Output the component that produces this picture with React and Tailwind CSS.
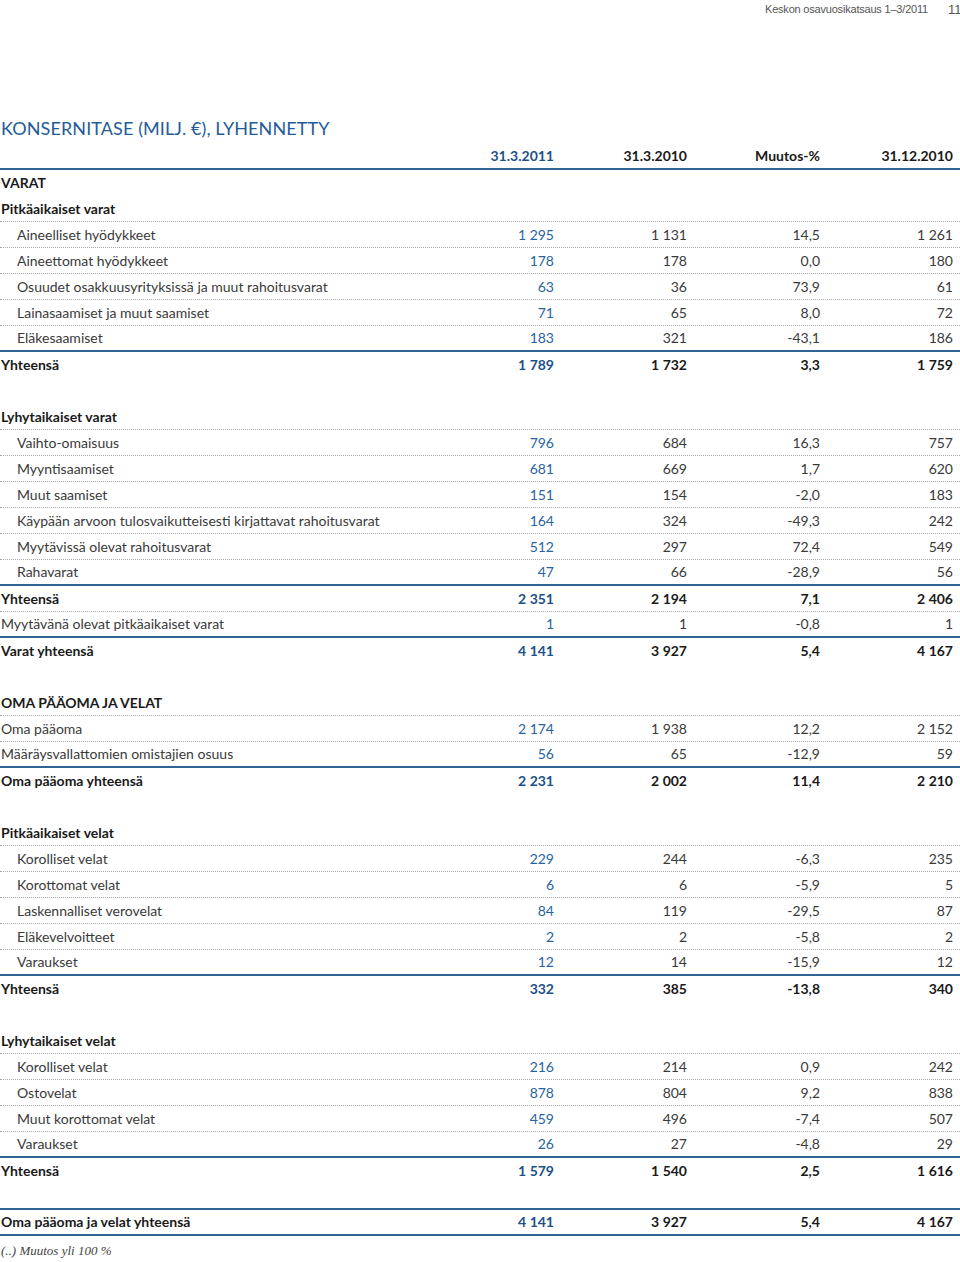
import React from "react";

const D = "dotted";
const S = "solid";

// type: h (section heading bold), r (regular indented), f (regular flush), t (total bold), b (blank)
const rows = [
  { type: "h", label: "VARAT" },
  { type: "h", label: "Pitkäaikaiset varat", line: D },
  { type: "r", label: "Aineelliset hyödykkeet", v: ["1 295", "1 131", "14,5", "1 261"], line: D },
  { type: "r", label: "Aineettomat hyödykkeet", v: ["178", "178", "0,0", "180"], line: D },
  { type: "r", label: "Osuudet osakkuusyrityksissä ja muut rahoitusvarat", v: ["63", "36", "73,9", "61"], line: D },
  { type: "r", label: "Lainasaamiset ja muut saamiset", v: ["71", "65", "8,0", "72"], line: D },
  { type: "r", label: "Eläkesaamiset", v: ["183", "321", "-43,1", "186"], line: S },
  { type: "t", label: "Yhteensä", v: ["1 789", "1 732", "3,3", "1 759"] },
  { type: "b" },
  { type: "h", label: "Lyhytaikaiset varat", line: D },
  { type: "r", label: "Vaihto-omaisuus", v: ["796", "684", "16,3", "757"], line: D },
  { type: "r", label: "Myyntisaamiset", v: ["681", "669", "1,7", "620"], line: D },
  { type: "r", label: "Muut saamiset", v: ["151", "154", "-2,0", "183"], line: D },
  { type: "r", label: "Käypään arvoon tulosvaikutteisesti kirjattavat rahoitusvarat", v: ["164", "324", "-49,3", "242"], line: D },
  { type: "r", label: "Myytävissä olevat rahoitusvarat", v: ["512", "297", "72,4", "549"], line: D },
  { type: "r", label: "Rahavarat", v: ["47", "66", "-28,9", "56"], line: S },
  { type: "t", label: "Yhteensä", v: ["2 351", "2 194", "7,1", "2 406"], line: D },
  { type: "f", label: "Myytävänä olevat pitkäaikaiset varat", v: ["1", "1", "-0,8", "1"], line: S },
  { type: "t", label: "Varat yhteensä", v: ["4 141", "3 927", "5,4", "4 167"] },
  { type: "b" },
  { type: "h", label: "OMA PÄÄOMA JA VELAT", line: D },
  { type: "f", label: "Oma pääoma", v: ["2 174", "1 938", "12,2", "2 152"], line: D },
  { type: "f", label: "Määräysvallattomien omistajien osuus", v: ["56", "65", "-12,9", "59"], line: S },
  { type: "t", label: "Oma pääoma yhteensä", v: ["2 231", "2 002", "11,4", "2 210"] },
  { type: "b" },
  { type: "h", label: "Pitkäaikaiset velat", line: D },
  { type: "r", label: "Korolliset velat", v: ["229", "244", "-6,3", "235"], line: D },
  { type: "r", label: "Korottomat velat", v: ["6", "6", "-5,9", "5"], line: D },
  { type: "r", label: "Laskennalliset verovelat", v: ["84", "119", "-29,5", "87"], line: D },
  { type: "r", label: "Eläkevelvoitteet", v: ["2", "2", "-5,8", "2"], line: D },
  { type: "r", label: "Varaukset", v: ["12", "14", "-15,9", "12"], line: S },
  { type: "t", label: "Yhteensä", v: ["332", "385", "-13,8", "340"] },
  { type: "b" },
  { type: "h", label: "Lyhytaikaiset velat", line: D },
  { type: "r", label: "Korolliset velat", v: ["216", "214", "0,9", "242"], line: D },
  { type: "r", label: "Ostovelat", v: ["878", "804", "9,2", "838"], line: D },
  { type: "r", label: "Muut korottomat velat", v: ["459", "496", "-7,4", "507"], line: D },
  { type: "r", label: "Varaukset", v: ["26", "27", "-4,8", "29"], line: S },
  { type: "t", label: "Yhteensä", v: ["1 579", "1 540", "2,5", "1 616"] },
  { type: "b", line: S },
  { type: "t", label: "Oma pääoma ja velat yhteensä", v: ["4 141", "3 927", "5,4", "4 167"], line: S },
];

function Row({ row }) {
  let lineCls = "";
  if (row.line === D) lineCls = "border-b border-dotted border-[#a8a8a8]";
  if (row.line === S) lineCls = "border-b-2 border-solid border-[#2f6593]";
  const bold = row.type === "t" || row.type === "h";
  const labelCls =
    row.type === "r"
      ? "pl-[17px] text-[#3a3a3a]"
      : row.type === "f"
      ? "pl-[1px] text-[#3a3a3a]"
      : "pl-[1px] font-bold text-[#1a1a1a]";
  return (
    <div className={`grid grid-cols-[1fr_133px_133px_133px_133px] h-[26px] box-border items-center ${lineCls}`}>
      <div className={`whitespace-nowrap ${labelCls}`}>{row.label || ""}</div>
      {(row.v || ["", "", "", ""]).map((x, i) => (
        <div
          key={i}
          className={`text-right pr-[7px] whitespace-nowrap ${
            i === 0
              ? bold
                ? "font-bold text-[#1d5187]"
                : "text-[#2a64a0]"
              : bold
              ? "font-bold text-[#1a1a1a]"
              : "text-[#3a3a3a]"
          }`}
        >
          {x}
        </div>
      ))}
    </div>
  );
}

export default function App() {
  return (
    <div className="w-[960px] h-[1262px] bg-white overflow-hidden font-['Lato','Open_Sans',sans-serif] text-[14px] leading-none">
      <div className="flex justify-end items-center h-[18px] pr-[2px] text-[#555] font-['Liberation_Sans_Narrow','Liberation_Sans',sans-serif]">
        <span className="text-[11px] tracking-[-0.2px]">Keskon osavuosikatsaus 1–3/2011</span>
        <span className="ml-[20px] w-[10px] text-right text-[13px]">11</span>
      </div>
      <div className="h-[125px] flex items-end">
        <h1 className="pl-[1px] text-[18px] text-[#1f5c99] leading-none mb-[6px] tracking-[0.1px]">
          KONSERNITASE (MILJ. €), LYHENNETTY
        </h1>
      </div>
      <div className="grid grid-cols-[1fr_133px_133px_133px_133px] h-[27px] box-border items-center border-b-2 border-[#2f6593] font-bold">
        <div></div>
        <div className="text-right pr-[7px] text-[#1d5187]">31.3.2011</div>
        <div className="text-right pr-[7px] text-[#1a1a1a]">31.3.2010</div>
        <div className="text-right pr-[7px] text-[#1a1a1a]">Muutos-%</div>
        <div className="text-right pr-[7px] text-[#1a1a1a]">31.12.2010</div>
      </div>
      {rows.map((r, i) => (
        <Row key={i} row={r} />
      ))}
      <div className="h-[24px] flex items-center pt-[4px] pl-[1px] italic text-[13px] text-[#444] font-['Liberation_Serif','DejaVu_Serif',serif]">
        (..) Muutos yli 100 %
      </div>
    </div>
  );
}
